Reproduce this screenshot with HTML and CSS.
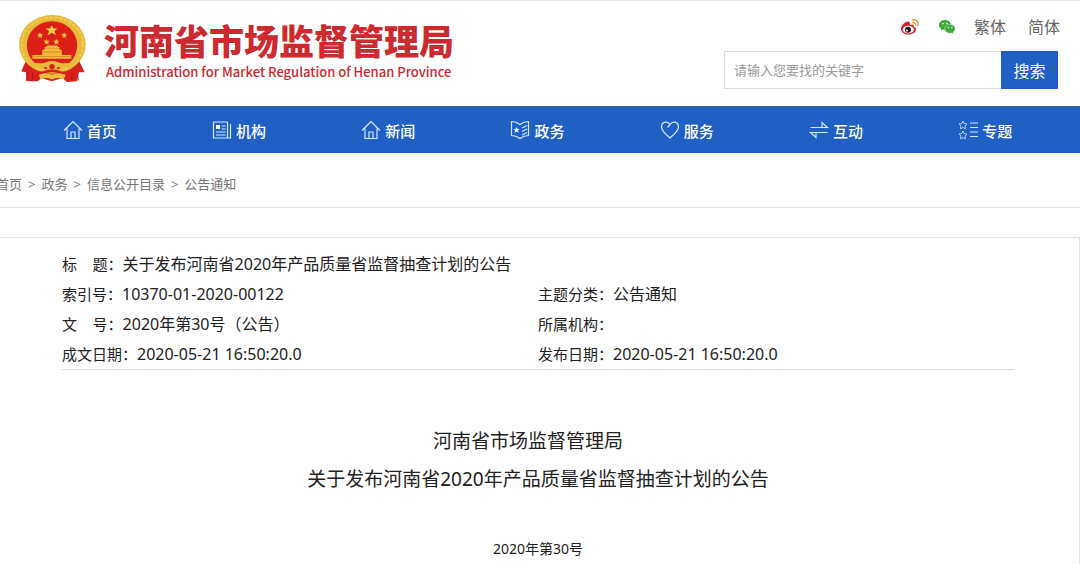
FILE: index.html
```html
<!DOCTYPE html>
<html lang="zh-CN">

<head>
    <meta charset="UTF-8">
    <meta name="viewport" content="width=device-width, initial-scale=1.0">
    <title>河南省市场监督管理局</title>
    <link rel="stylesheet" href="styles.css">
</head>

<body>
    <header class="header">
        <a class="logo" href="#">
            <svg class="emblem" viewBox="27 28 208 210" aria-hidden="true">
                <path d="M52 160 L34 202 L48 204 L52 232 L84 232 L96 222 L127 232 L160 222 L174 234 L204 232 L210 204 L228 204 L206 160 Z" fill="#d8201c"/>
                <ellipse cx="129" cy="119" rx="102" ry="90" fill="#e9b93a"/>
                <ellipse cx="129" cy="119" rx="94" ry="82" fill="none" stroke="#f2cd58" stroke-width="6" stroke-dasharray="9 6"/>
                <ellipse cx="128" cy="122" rx="77" ry="74" fill="#dc1f17"/>
                <path d="M127 60 l5 10 h13 l-10 8 l5 12 l-13 -7 l-12 8 l4 -13 l-11 -8 h14 z" fill="#f7d046"/>
                <g fill="#f2b93c">
                    <path d="M91 82 l3 6 h7 l-5 5 l2 7 l-7 -4 l-6 4 l2 -7 l-6 -5 h7 z"/>
                    <path d="M165 82 l3 6 h7 l-5 5 l2 7 l-7 -4 l-6 4 l2 -7 l-6 -5 h7 z"/>
                    <path d="M111 102 l3 6 h7 l-5 5 l2 7 l-7 -4 l-6 4 l2 -7 l-6 -5 h7 z"/>
                    <path d="M141 102 l3 6 h7 l-5 5 l2 7 l-7 -4 l-6 4 l2 -7 l-6 -5 h7 z"/>
                    <path d="M105 128 q6 -2 8 -6 h30 q2 4 8 6 v4 h-46 z"/>
                    <path d="M98 137 q6 -2 8 -5 h44 q2 3 8 5 v14 h-60 z"/>
                    <path d="M68 151 h119 v12 h-119 z"/>
                </g>
                <path d="M98 142 h60 M68 156 h119" stroke="#c9791f" stroke-width="2"/>
                <path d="M56 168 q30 14 52 6 q20 -8 40 0 q24 8 52 -6 l-4 14 q-26 14 -50 6 q-18 -6 -36 0 q-24 8 -50 -6 z" fill="#e9b93a"/>
                <circle cx="128" cy="187" r="16" fill="#e9b93a"/>
                <circle cx="128" cy="187" r="8" fill="#dc1f17"/>
                <path d="M50 190 q24 22 54 14 q24 -8 48 0 q30 8 54 -14" fill="none" stroke="#d8201c" stroke-width="8"/>
                <path d="M88 212 q20 -10 40 0 q20 -10 42 0 l-6 14 q-18 -8 -36 0 q-18 -8 -36 0 z" fill="#edbd3e"/>
                <path d="M52 208 l-2 22 M206 208 l2 22 M68 206 l2 24 M190 206 l-2 24" stroke="#b01512" stroke-width="3"/>
            </svg>
            <span class="logo-text">
                <span class="logo-cn">河南省市场监督管理局</span>
                <span class="logo-en">Administration for Market Regulation of Henan Province</span>
            </span>
        </a>
        <div class="header-right">
            <div class="top-links">
                <a href="#" aria-label="微博">
                    <svg width="20" height="18" viewBox="0 0 20 18">
                        <path d="M7.500 3.500 C4 4.500 1 8 1 11 C1 14.500 4.500 16.500 8.500 16.500 C13 16.500 16 14 16 11.500 C16 9.800 14.700 9 13.600 8.600 C14.200 6.500 12.500 5.800 9.800 7 C10.300 4.500 9.500 3 7.500 3.500 Z" fill="#d6232a"/>
                        <ellipse cx="8.300" cy="11.600" rx="5.600" ry="3.800" fill="#fff"/>
                        <circle cx="8" cy="11.700" r="3" fill="#1c1413"/>
                        <circle cx="7" cy="12.400" r="1" fill="#fff"/>
                        <path d="M12.500 2 C16.500 1 19 4 17.800 7.500 M12.800 4.600 C15 4.200 16 5.500 15.400 7.200" fill="none" stroke="#eb9a35" stroke-width="1.400" stroke-linecap="round"/>
                    </svg>
                </a>
                <a href="#" aria-label="微信">
                    <svg width="18" height="16" viewBox="0 0 18 16">
                        <path d="M7 1 C3.500 1 1 3.200 1 6 C1 7.600 1.800 8.900 3.100 9.800 L2.600 11.600 L4.700 10.600 C8 11.600 13 10 13 6 C13 3.200 10.500 1 7 1 Z" fill="#3cab3c"/>
                        <path d="M12 5.500 C9 5.500 6.800 7.500 6.800 9.900 C6.800 12.800 10 14.800 13.500 14 L15.500 15 L15 13.300 C19 10.500 17 5.500 12 5.500 Z" fill="#3cab3c" stroke="#fff" stroke-width="0.400"/>
                        <g fill="#fff">
                            <circle cx="5" cy="4.500" r="0.800"/>
                            <circle cx="9" cy="4.500" r="0.800"/>
                            <circle cx="10.400" cy="8.800" r="0.700"/>
                            <circle cx="13.800" cy="8.800" r="0.700"/>
                        </g>
                    </svg>
                </a>
                <a href="#">繁体</a>
                <a class="simplified" href="#">简体</a>
            </div>
            <form class="search">
                <input type="text" placeholder="请输入您要找的关键字" aria-label="请输入您要找的关键字">
                <button type="button">搜索</button>
            </form>
        </div>
    </header>

    <nav class="navbar">
        <ul>
            <li><a href="#">
                <svg viewBox="0 0 20 20"><path d="M1 10.500 L10 1.500 L19 10.500 M4 8.500 V18.500 H16 V8.500 M8 18.500 V12 H12 V18.500"/></svg>
                首页</a></li>
            <li><a href="#">
                <svg viewBox="0 0 20 20"><path d="M1.500 2 H15.500 V18 H1.500 Z M18.500 4 V18 H15.500 M9.500 6 H13.500 M9.500 9 H13.500 M4 12 H13.500 M4 15 H13.500"/><path class="solid" d="M4 5 h4 v4 h-4 z"/></svg>
                机构</a></li>
            <li><a href="#">
                <svg viewBox="0 0 20 20"><path d="M1 10.500 L10 1.500 L19 10.500 M4 8.500 V18.500 H16 V8.500 M8 18.500 V12 H12 V18.500"/></svg>
                新闻</a></li>
            <li><a href="#">
                <svg viewBox="0 0 20 20"><path d="M1.500 1.500 Q6 1.500 10 4.500 Q14 1.500 18.500 1.500 V15.500 Q14 15.500 10 18.500 Q6 15.500 1.500 15.500 Z M12 8 L17 5.500 M12 11.500 L17 9 M12 15 L17 12.500"/><path class="solid" d="M6.500 7 l1 2 h2 l-1.500 1.500 l.5 2.200 l-2 -1.200 l-2 1.200 l.5 -2.200 l-1.500 -1.500 h2 z"/></svg>
                政务</a></li>
            <li><a href="#">
                <svg viewBox="0 0 20 20"><path d="M10 18 C6 14.500 1.500 11 1.500 7 C1.500 1.500 7.500 .5 10 4.500 C12.500 .5 18.500 1.500 18.500 7 C18.500 11 14 14.500 10 18 Z M10 4.500 L7.500 7.500"/></svg>
                服务</a></li>
            <li><a href="#">
                <svg viewBox="0 0 20 20"><path d="M1.500 7.500 H18.500 L13 2.500 V7 M18.500 12.500 H1.500 L7 17.500 V13"/></svg>
                互动</a></li>
            <li><a href="#">
                <svg viewBox="0 0 20 20"><path d="M12 3 H20 M12 7.500 H20 M12 12 H20 M12 16.500 H20"/><path class="thin" d="M5 1 l1.200 2.600 l2.800 .4 l-2 2 l.5 2.800 l-2.500 -1.300 l-2.500 1.300 l.5 -2.800 l-2 -2 l2.800 -.4 z M5 11 l1.200 2.600 l2.800 .4 l-2 2 l.5 2.800 l-2.500 -1.300 l-2.500 1.300 l.5 -2.800 l-2 -2 l2.800 -.4 z"/></svg>
                专题</a></li>
        </ul>
    </nav>

    <div class="breadcrumb">
        <a href="#">首页</a>
        <span>&gt;</span>
        <a href="#">政务</a>
        <span>&gt;</span>
        <a href="#">信息公开目录</a>
        <span>&gt;</span>
        <a href="#">公告通知</a>
    </div>

    <main class="content">
        <table class="info">
            <tr>
                <td colspan="2"><span class="label">标&nbsp;&nbsp;&nbsp;&nbsp;题：</span>关于发布河南省2020年产品质量省监督抽查计划的公告</td>
            </tr>
            <tr>
                <td><span class="label">索引号：</span>10370-01-2020-00122</td>
                <td><span class="label">主题分类：</span>公告通知</td>
            </tr>
            <tr>
                <td><span class="label">文&nbsp;&nbsp;&nbsp;&nbsp;号：</span>2020年第30号（公告）</td>
                <td><span class="label">所属机构：</span></td>
            </tr>
            <tr>
                <td><span class="label">成文日期：</span>2020-05-21 16:50:20.0</td>
                <td><span class="label">发布日期：</span>2020-05-21 16:50:20.0</td>
            </tr>
        </table>

        <article class="article">
            <h1>河南省市场监督管理局&nbsp;&nbsp;&nbsp;&nbsp;<br>关于发布河南省2020年产品质量省监督抽查计划的公告</h1>
            <p>2020年第30号</p>
        </article>
    </main>
</body>

</html>
```

FILE: styles.css
```css
* {
    box-sizing: border-box;
}

body {
    margin: 0;
    min-height: 100vh;
    display: flex;
    flex-direction: column;
    overflow-x: hidden;
    background: #fff;
    color: #222;
    font-family: "Noto Sans", "Noto Sans CJK SC", sans-serif;
    font-size: 16px;
}

a {
    color: inherit;
    text-decoration: none;
}

/* header */
.header {
    display: flex;
    justify-content: space-between;
    height: 106px;
    padding: 13px 20px 0 19px;
    border-top: 1px solid #e8e8e8;
}

.logo {
    display: flex;
    gap: 17px;
    color: #cc2a2e;
    font-family: "Noto Sans CJK SC", sans-serif;
}

.emblem {
    width: 68px;
    height: 70px;
}

.logo-text {
    display: flex;
    flex-direction: column;
    padding-top: 3px;
}

.logo-cn {
    font-size: 35px;
    font-weight: 900;
    line-height: 46px;
}

.logo-en {
    padding-left: 2px;
    font-size: 13px;
    font-weight: 500;
    line-height: 18px;
}

.header-right {
    display: flex;
    flex-direction: column;
    gap: 14px;
}

.top-links {
    display: flex;
    justify-content: flex-end;
    align-items: center;
    gap: 18px;
    height: 23px;
    color: #666;
}

.top-links svg {
    display: block;
    margin-top: 2px;
}

.simplified {
    margin-left: 4px;
}

.search {
    display: flex;
    padding-right: 2px;
}

.search input {
    width: 277px;
    height: 38px;
    padding: 0 9px;
    border: 1px solid #ddd;
    border-right: 0;
    font-family: inherit;
    font-size: 13px;
    outline: none;
}

.search input::placeholder {
    color: #999;
}

.search button {
    width: 57px;
    height: 38px;
    padding: 0;
    border: 0;
    background: #2060c4;
    color: #fff;
    font-family: inherit;
    font-size: 16px;
    cursor: pointer;
}

/* main menu */
.navbar {
    padding: 0 20px 0 15px;
    border-top: 1px solid #3d6297;
    background: #2060c4;
    color: #fff;
}

.navbar ul {
    display: grid;
    grid-template-columns: repeat(7, 1fr);
    margin: 0;
    padding: 0;
    list-style: none;
}

.navbar a {
    display: flex;
    justify-content: center;
    align-items: center;
    gap: 4px;
    height: 46px;
    font-size: 15px;
    font-weight: 500;
}

.navbar svg {
    width: 20px;
    height: 20px;
    fill: none;
    stroke: #d3e6ff;
    stroke-width: 1.2;
}

.navbar .solid {
    fill: #fff;
    stroke: none;
}

.navbar .thin {
    stroke-width: 0.8;
}

/* current position */
.breadcrumb {
    display: flex;
    gap: 6px;
    height: 55px;
    margin-left: -4px;
    border-bottom: 1px solid #e2e2e2;
    color: #777;
    font-size: 13px;
    line-height: 62px;
}

/* document */
.content {
    flex: 1;
    margin-top: 29px;
    padding: 11px 65px 0 62px;
    border-top: 1px solid #e2e2e2;
    border-right: 1px solid #e2e2e2;
}

.info {
    width: 100%;
    table-layout: fixed;
    border-collapse: collapse;
    border-bottom: 1px solid #ddd;
}

.info td {
    height: 30px;
    padding: 0;
    line-height: 30px;
}

.info .label {
    font-size: 15px;
}

.article {
    text-align: center;
}

.article h1 {
    margin: 52px 0 0;
    font-size: 19px;
    font-weight: normal;
    line-height: 38px;
}

.article p {
    margin: 39px 0 0;
    font-size: 14px;
    line-height: 24px;
}
```
